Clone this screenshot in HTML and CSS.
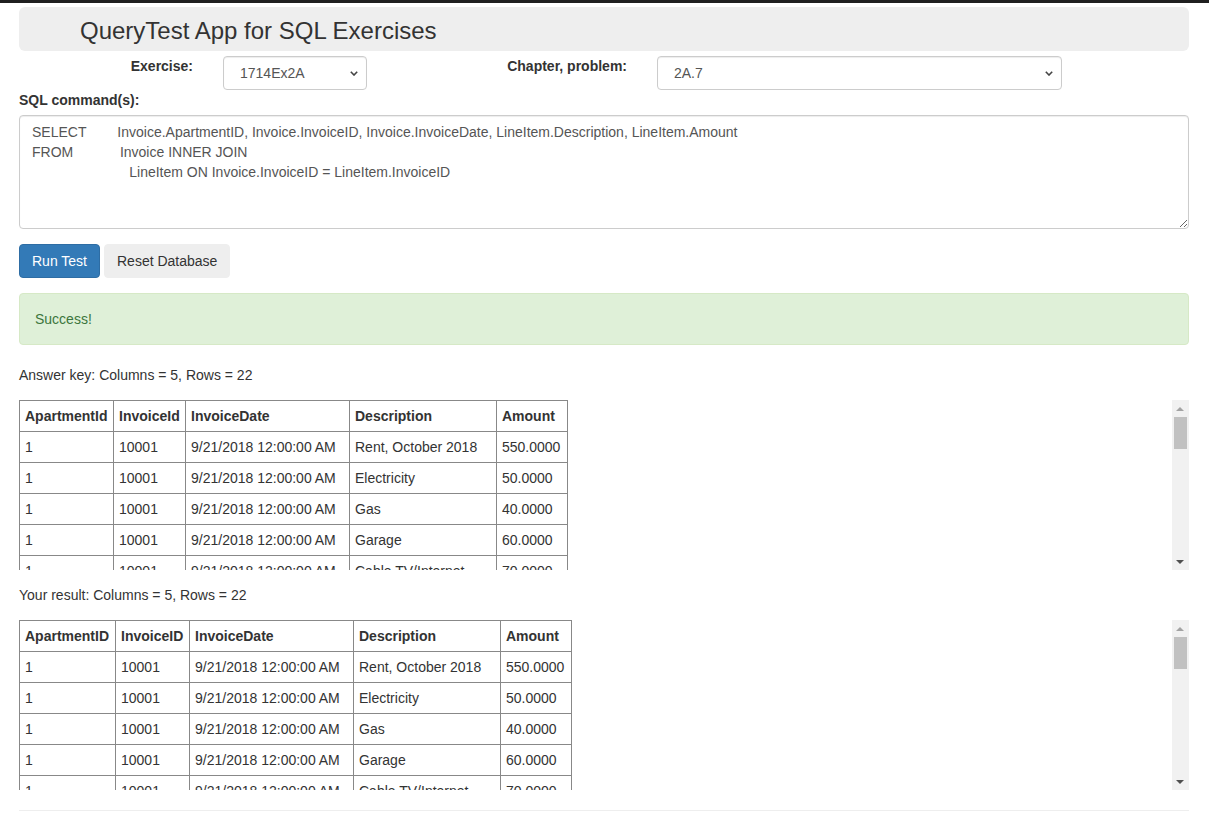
FILE: index.html
```html
<!DOCTYPE html>
<html lang="en">
<head>
<meta charset="utf-8">
<title>QueryTest App for SQL Exercises</title>
<link rel="stylesheet" href="styles.css">
</head>
<body>
<div class="container">
  <div class="header"><h1>QueryTest App for SQL Exercises</h1></div>

  <div class="selectors">
    <label class="lbl lbl-ex">Exercise:</label>
    <div class="select-wrap sw-ex">
      <select><option>1714Ex2A</option></select>
      <svg class="chev" width="8" height="5" viewBox="0 0 8 5"><path d="M0.8 0.8 L4 4 L7.2 0.8" fill="none" stroke="#444" stroke-width="1.6"/></svg>
    </div>
    <label class="lbl lbl-ch">Chapter, problem:</label>
    <div class="select-wrap sw-ch">
      <select><option>2A.7</option></select>
      <svg class="chev" width="8" height="5" viewBox="0 0 8 5"><path d="M0.8 0.8 L4 4 L7.2 0.8" fill="none" stroke="#444" stroke-width="1.6"/></svg>
    </div>
  </div>

  <label class="sql-label">SQL command(s):</label>
  <textarea class="sql">SELECT        Invoice.ApartmentID, Invoice.InvoiceID, Invoice.InvoiceDate, LineItem.Description, LineItem.Amount
FROM            Invoice INNER JOIN
                         LineItem ON Invoice.InvoiceID = LineItem.InvoiceID</textarea>

  <div class="buttons">
    <button class="btn btn-primary">Run Test</button>
    <button class="btn btn-default">Reset Database</button>
  </div>

  <div class="alert">Success!</div>

  <p class="summary">Answer key: Columns = 5, Rows = 22</p>
  <div class="scroll-area">
    <div class="scroll-content">
      <table class="grid grid-key">
        <colgroup><col class="c1"><col class="c2"><col class="c3"><col class="c4"><col class="c5"></colgroup>
        <tr><th>ApartmentId</th><th>InvoiceId</th><th>InvoiceDate</th><th>Description</th><th>Amount</th></tr>
        <tr><td>1</td><td>10001</td><td>9/21/2018 12:00:00 AM</td><td>Rent, October 2018</td><td>550.0000</td></tr>
        <tr><td>1</td><td>10001</td><td>9/21/2018 12:00:00 AM</td><td>Electricity</td><td>50.0000</td></tr>
        <tr><td>1</td><td>10001</td><td>9/21/2018 12:00:00 AM</td><td>Gas</td><td>40.0000</td></tr>
        <tr><td>1</td><td>10001</td><td>9/21/2018 12:00:00 AM</td><td>Garage</td><td>60.0000</td></tr>
        <tr><td>1</td><td>10001</td><td>9/21/2018 12:00:00 AM</td><td>Cable TV/Internet</td><td>70.0000</td></tr>
        <tr><td>2</td><td>10002</td><td>9/21/2018 12:00:00 AM</td><td>Rent, October 2018</td><td>600.0000</td></tr>
        <tr><td>2</td><td>10002</td><td>9/21/2018 12:00:00 AM</td><td>Electricity</td><td>55.0000</td></tr>
        <tr><td>2</td><td>10002</td><td>9/21/2018 12:00:00 AM</td><td>Gas</td><td>45.0000</td></tr>
        <tr><td>2</td><td>10002</td><td>9/21/2018 12:00:00 AM</td><td>Cable TV/Internet</td><td>70.0000</td></tr>
        <tr><td>3</td><td>10003</td><td>9/21/2018 12:00:00 AM</td><td>Rent, October 2018</td><td>650.0000</td></tr>
        <tr><td>3</td><td>10003</td><td>9/21/2018 12:00:00 AM</td><td>Electricity</td><td>60.0000</td></tr>
        <tr><td>3</td><td>10003</td><td>9/21/2018 12:00:00 AM</td><td>Gas</td><td>45.0000</td></tr>
        <tr><td>3</td><td>10003</td><td>9/21/2018 12:00:00 AM</td><td>Garage</td><td>60.0000</td></tr>
        <tr><td>3</td><td>10003</td><td>9/21/2018 12:00:00 AM</td><td>Cable TV/Internet</td><td>70.0000</td></tr>
        <tr><td>4</td><td>10004</td><td>9/21/2018 12:00:00 AM</td><td>Rent, October 2018</td><td>700.0000</td></tr>
        <tr><td>4</td><td>10004</td><td>9/21/2018 12:00:00 AM</td><td>Electricity</td><td>65.0000</td></tr>
        <tr><td>4</td><td>10004</td><td>9/21/2018 12:00:00 AM</td><td>Gas</td><td>50.0000</td></tr>
        <tr><td>4</td><td>10004</td><td>9/21/2018 12:00:00 AM</td><td>Cable TV/Internet</td><td>70.0000</td></tr>
        <tr><td>5</td><td>10005</td><td>9/21/2018 12:00:00 AM</td><td>Rent, October 2018</td><td>575.0000</td></tr>
        <tr><td>5</td><td>10005</td><td>9/21/2018 12:00:00 AM</td><td>Electricity</td><td>50.0000</td></tr>
        <tr><td>5</td><td>10005</td><td>9/21/2018 12:00:00 AM</td><td>Gas</td><td>40.0000</td></tr>
        <tr><td>5</td><td>10005</td><td>9/21/2018 12:00:00 AM</td><td>Garage</td><td>60.0000</td></tr>
      </table>
    </div>
    <div class="scrollbar" aria-hidden="true">
      <div class="sb-btn"><span class="arrow-up"></span></div>
      <div class="sb-track"><div class="sb-thumb"></div></div>
      <div class="sb-btn"><span class="arrow-down"></span></div>
    </div>
  </div>

  <p class="summary summary-result">Your result: Columns = 5, Rows = 22</p>
  <div class="scroll-area">
    <div class="scroll-content">
      <table class="grid grid-result">
        <colgroup><col class="c1"><col class="c2"><col class="c3"><col class="c4"><col class="c5"></colgroup>
        <tr><th>ApartmentID</th><th>InvoiceID</th><th>InvoiceDate</th><th>Description</th><th>Amount</th></tr>
        <tr><td>1</td><td>10001</td><td>9/21/2018 12:00:00 AM</td><td>Rent, October 2018</td><td>550.0000</td></tr>
        <tr><td>1</td><td>10001</td><td>9/21/2018 12:00:00 AM</td><td>Electricity</td><td>50.0000</td></tr>
        <tr><td>1</td><td>10001</td><td>9/21/2018 12:00:00 AM</td><td>Gas</td><td>40.0000</td></tr>
        <tr><td>1</td><td>10001</td><td>9/21/2018 12:00:00 AM</td><td>Garage</td><td>60.0000</td></tr>
        <tr><td>1</td><td>10001</td><td>9/21/2018 12:00:00 AM</td><td>Cable TV/Internet</td><td>70.0000</td></tr>
        <tr><td>2</td><td>10002</td><td>9/21/2018 12:00:00 AM</td><td>Rent, October 2018</td><td>600.0000</td></tr>
        <tr><td>2</td><td>10002</td><td>9/21/2018 12:00:00 AM</td><td>Electricity</td><td>55.0000</td></tr>
        <tr><td>2</td><td>10002</td><td>9/21/2018 12:00:00 AM</td><td>Gas</td><td>45.0000</td></tr>
        <tr><td>2</td><td>10002</td><td>9/21/2018 12:00:00 AM</td><td>Cable TV/Internet</td><td>70.0000</td></tr>
        <tr><td>3</td><td>10003</td><td>9/21/2018 12:00:00 AM</td><td>Rent, October 2018</td><td>650.0000</td></tr>
        <tr><td>3</td><td>10003</td><td>9/21/2018 12:00:00 AM</td><td>Electricity</td><td>60.0000</td></tr>
        <tr><td>3</td><td>10003</td><td>9/21/2018 12:00:00 AM</td><td>Gas</td><td>45.0000</td></tr>
        <tr><td>3</td><td>10003</td><td>9/21/2018 12:00:00 AM</td><td>Garage</td><td>60.0000</td></tr>
        <tr><td>3</td><td>10003</td><td>9/21/2018 12:00:00 AM</td><td>Cable TV/Internet</td><td>70.0000</td></tr>
        <tr><td>4</td><td>10004</td><td>9/21/2018 12:00:00 AM</td><td>Rent, October 2018</td><td>700.0000</td></tr>
        <tr><td>4</td><td>10004</td><td>9/21/2018 12:00:00 AM</td><td>Electricity</td><td>65.0000</td></tr>
        <tr><td>4</td><td>10004</td><td>9/21/2018 12:00:00 AM</td><td>Gas</td><td>50.0000</td></tr>
        <tr><td>4</td><td>10004</td><td>9/21/2018 12:00:00 AM</td><td>Cable TV/Internet</td><td>70.0000</td></tr>
        <tr><td>5</td><td>10005</td><td>9/21/2018 12:00:00 AM</td><td>Rent, October 2018</td><td>575.0000</td></tr>
        <tr><td>5</td><td>10005</td><td>9/21/2018 12:00:00 AM</td><td>Electricity</td><td>50.0000</td></tr>
        <tr><td>5</td><td>10005</td><td>9/21/2018 12:00:00 AM</td><td>Gas</td><td>40.0000</td></tr>
        <tr><td>5</td><td>10005</td><td>9/21/2018 12:00:00 AM</td><td>Garage</td><td>60.0000</td></tr>
      </table>
    </div>
    <div class="scrollbar" aria-hidden="true">
      <div class="sb-btn"><span class="arrow-up"></span></div>
      <div class="sb-track"><div class="sb-thumb"></div></div>
      <div class="sb-btn"><span class="arrow-down"></span></div>
    </div>
  </div>

  <hr class="footer-rule">
</div>
</body>
</html>
```
FILE: styles.css
```css
html, body {
  margin: 0;
  padding: 0;
}
body {
  font-family: "Liberation Sans", Arial, Helvetica, sans-serif;
  font-size: 14px;
  line-height: 20px;
  color: #333;
  background: #fff;
  border-top: 3px solid #1f1f1f;
}
.container {
  width: 1170px;
  margin-left: 19px;
}
.header {
  margin-top: 4px;
  height: 44px;
  background: #eee;
  border-radius: 6px;
  display: flex;
  align-items: center;
  padding-left: 61px;
  box-sizing: border-box;
}
.header h1 {
  margin: 0;
  padding-top: 3px;
  font-size: 24px;
  font-weight: normal;
  line-height: 26px;
  color: #333;
}
.selectors {
  margin-top: 5px;
  display: flex;
  align-items: flex-start;
  height: 34px;
}
.lbl {
  font-weight: bold;
  text-align: right;
  line-height: 20px;
}
.lbl-ex {
  width: 174px;
  margin-right: 30px;
}
.lbl-ch {
  width: 260px;
  margin-right: 30px;
}
.select-wrap {
  position: relative;
  height: 34px;
}
.sw-ex { width: 144px; }
.sw-ch { width: 405px; }
.select-wrap select {
  -webkit-appearance: none;
  appearance: none;
  display: block;
  width: 100%;
  height: 34px;
  box-sizing: border-box;
  border: 1px solid #ccc;
  border-radius: 4px;
  padding: 0 24px 0 16px;
  font-family: "Liberation Sans", Arial, sans-serif;
  font-size: 14px;
  color: #555;
  background: #fff;
  box-shadow: inset 0 1px 1px rgba(0,0,0,.075);
  margin: 0;
}
.chev {
  position: absolute;
  right: 9px;
  top: 15px;
  pointer-events: none;
}
.sql-label {
  display: block;
  font-weight: bold;
  margin-bottom: 5px;
}
.sql {
  display: block;
  width: 1170px;
  height: 114px;
  box-sizing: border-box;
  margin: 0;
  border: 1px solid #ccc;
  border-radius: 4px;
  padding: 6px 12px;
  font-family: "Liberation Sans", Arial, sans-serif;
  font-size: 14px;
  line-height: 20px;
  color: #555;
  resize: vertical;
  box-shadow: inset 0 1px 1px rgba(0,0,0,.075);
}
.buttons {
  margin-top: 15px;
  display: flex;
  gap: 4px;
}
.btn {
  height: 34px;
  box-sizing: border-box;
  padding: 6px 12px;
  font-family: "Liberation Sans", Arial, sans-serif;
  font-size: 14px;
  line-height: 20px;
  border: 1px solid transparent;
  border-radius: 4px;
  margin: 0;
}
.btn-primary {
  background: #337ab7;
  border-color: #2e6da4;
  color: #fff;
}
.btn-default {
  background: #eee;
  border-color: #eee;
  color: #333;
}
.alert {
  margin-top: 15px;
  margin-bottom: 20px;
  padding: 15px;
  border: 1px solid #d6e9c6;
  background: #dff0d8;
  color: #3c763d;
  border-radius: 4px;
}
.summary {
  margin: 0 0 15px;
}
.summary-result {
  margin-top: 15px;
}
.scroll-area {
  display: flex;
  height: 170px;
}
.scroll-content {
  flex: 1;
  overflow: hidden;
}
.scrollbar {
  width: 17px;
  flex: none;
  background: #f1f1f1;
  display: flex;
  flex-direction: column;
}
.sb-btn {
  height: 17px;
  flex: none;
  display: flex;
  align-items: center;
  justify-content: center;
}
.arrow-up {
  width: 0;
  height: 0;
  border-left: 4px solid transparent;
  border-right: 4px solid transparent;
  border-bottom: 4px solid #a3a3a3;
  margin-right: 1px;
}
.arrow-down {
  width: 0;
  height: 0;
  border-left: 4px solid transparent;
  border-right: 4px solid transparent;
  border-top: 4px solid #505050;
  margin-right: 1px;
}
.sb-track {
  flex: 1;
  padding: 0 2px;
}
.sb-thumb {
  height: 32px;
  background: #c1c1c1;
}
.grid {
  border-collapse: collapse;
  table-layout: fixed;
}
.grid-key { width: 548px; }
.grid-result { width: 552px; }
.grid-key .c1 { width: 94px; }
.grid-key .c2 { width: 72px; }
.grid-result .c1 { width: 96px; }
.grid-result .c2 { width: 74px; }
.grid .c3 { width: 164px; }
.grid .c4 { width: 147px; }
.grid .c5 { width: 71px; }
.grid th, .grid td {
  border: 1px solid #888;
  padding: 5px;
  text-align: left;
  white-space: nowrap;
  overflow: hidden;
  line-height: 20px;
}
.grid th {
  font-weight: bold;
}
.footer-rule {
  margin: 20px 0 0;
  border: 0;
  border-top: 1px solid #eee;
  height: 0;
}
```
